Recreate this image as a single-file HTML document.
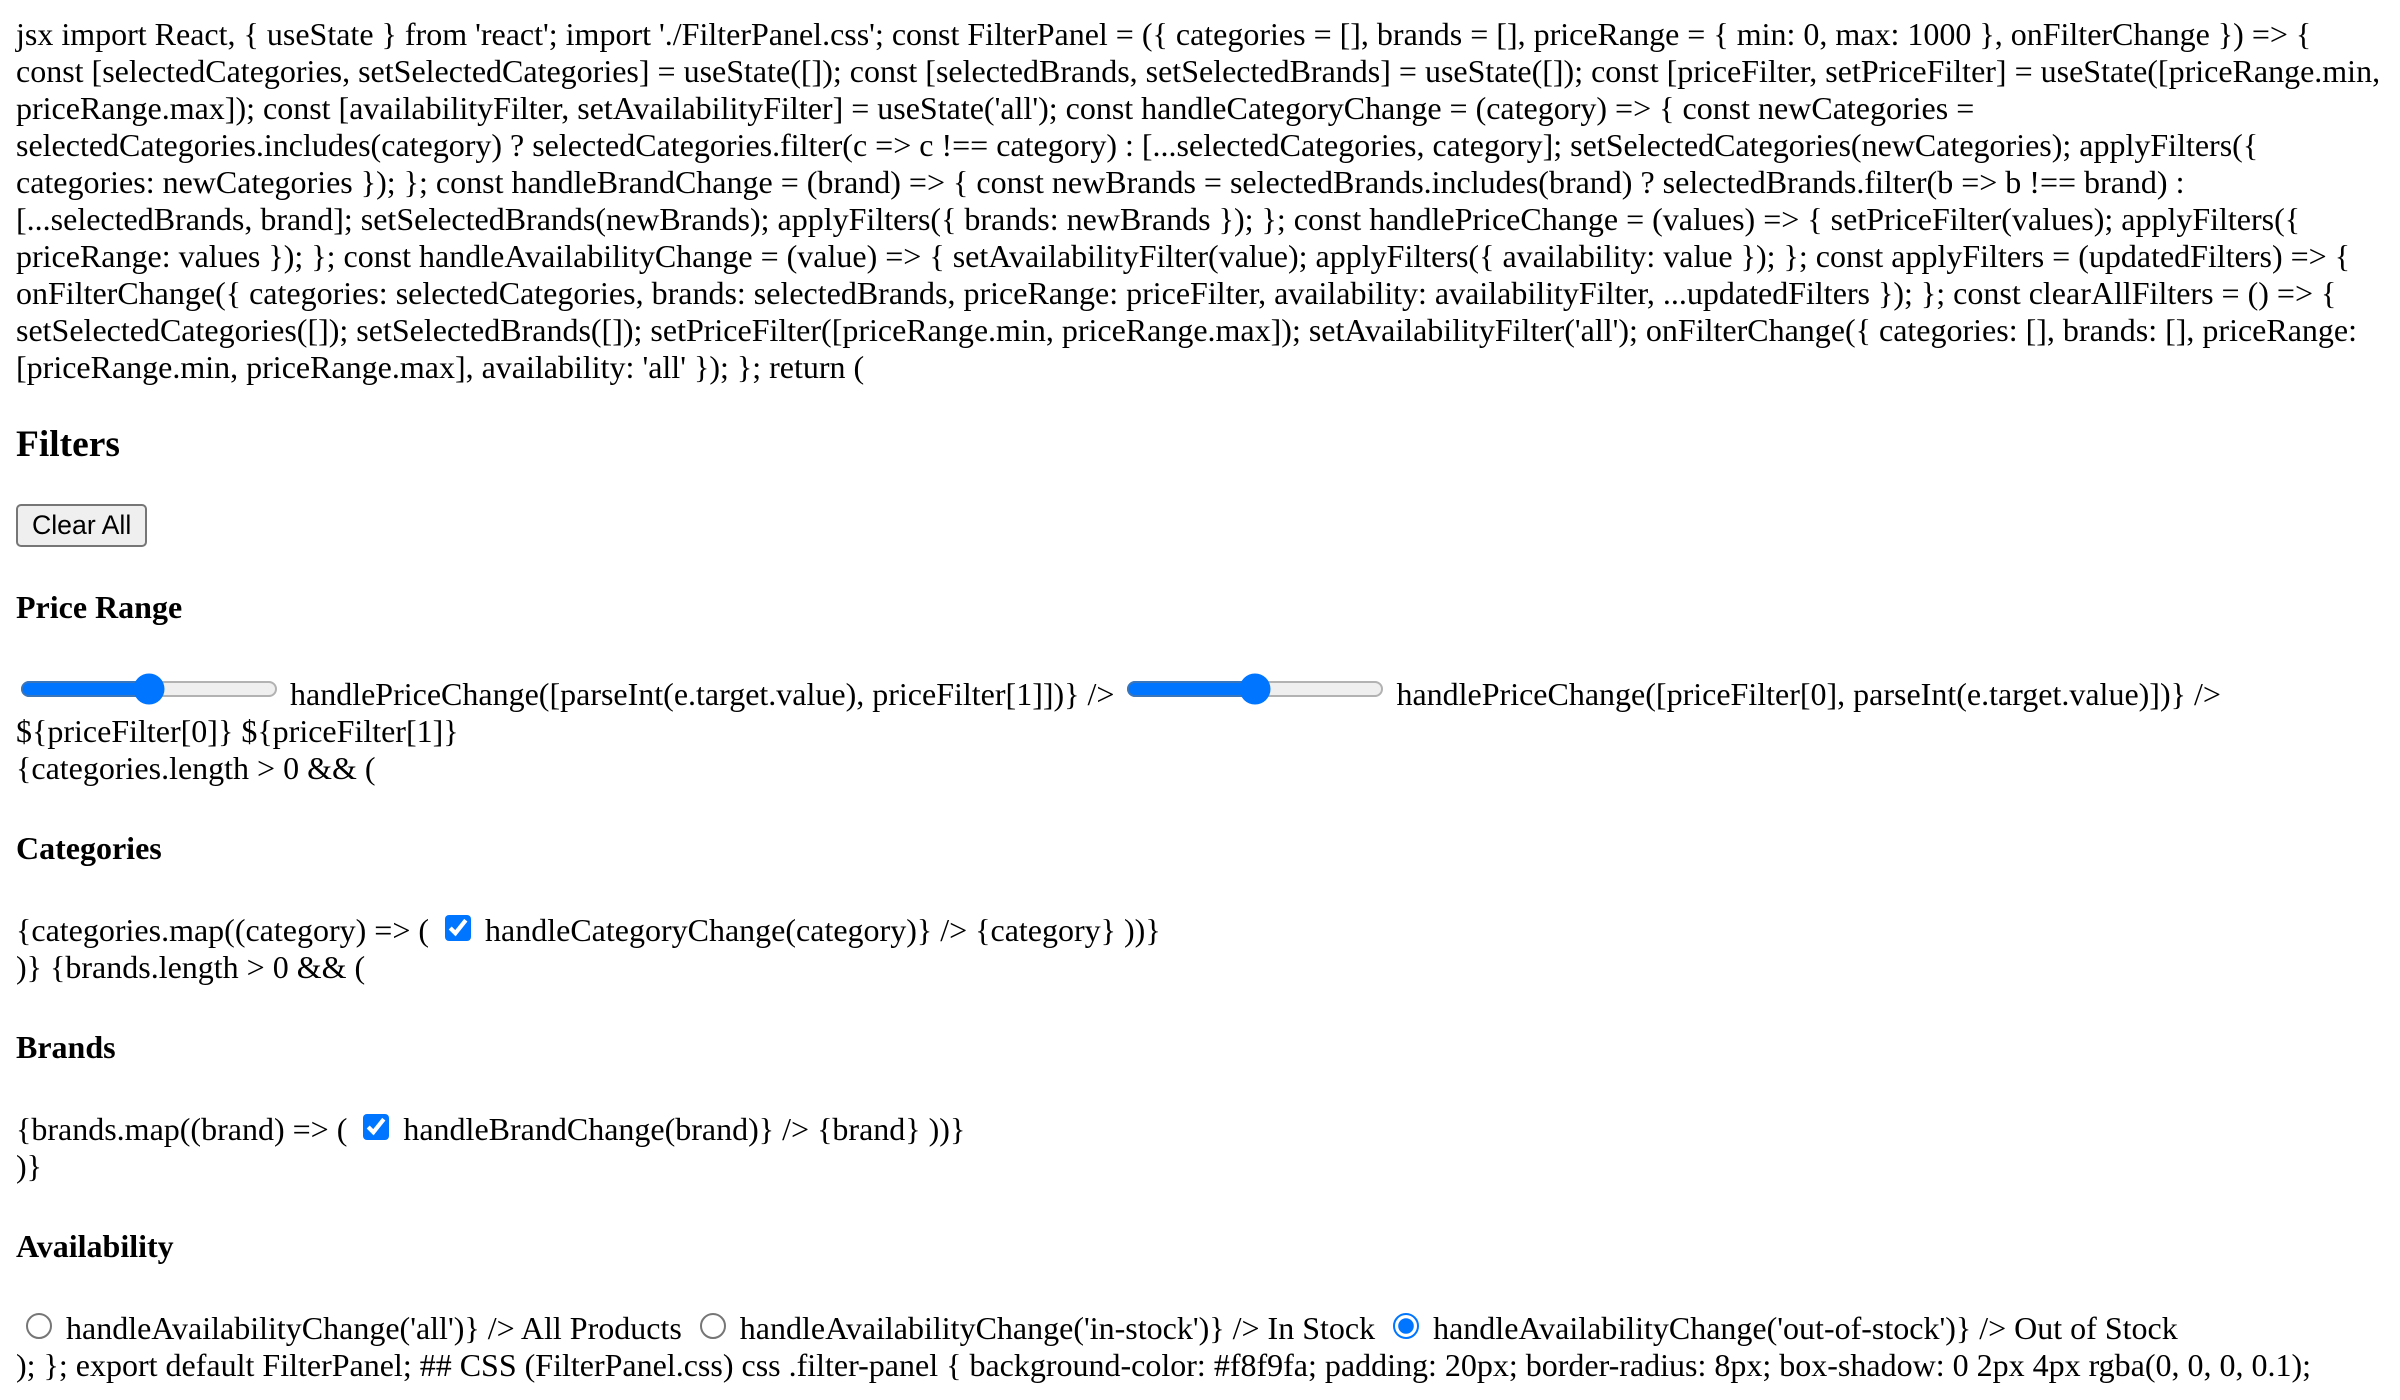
<!DOCTYPE html>
<html><head><meta charset="utf-8"><style>
html{zoom:2;}
body{margin:8px;font-family:"Liberation Serif",serif;font-size:16px;color:#000;background:#fff;}
.l{white-space:nowrap;}
h3{font-size:18.72px;margin:18.72px 0;}
h4{font-size:16px;margin:21.28px 0;}
button{font-family:"Liberation Sans",sans-serif;font-size:13.33px;padding:1px 6px;}
input[type=range]{margin:2px;}
input[type=checkbox]{margin:3px 3px 3px 4px;}
input[type=radio]{margin:3px 3px 0 5px;}
</style></head><body>
<div class="l">jsx import React, { useState } from 'react'; import './FilterPanel.css'; const FilterPanel = ({ categories = [], brands = [], priceRange = { min: 0, max: 1000 }, onFilterChange }) =&gt; {<br>
const [selectedCategories, setSelectedCategories] = useState([]); const [selectedBrands, setSelectedBrands] = useState([]); const [priceFilter, setPriceFilter] = useState([priceRange.min,<br>
priceRange.max]); const [availabilityFilter, setAvailabilityFilter] = useState('all'); const handleCategoryChange = (category) =&gt; { const newCategories =<br>
selectedCategories.includes(category) ? selectedCategories.filter(c =&gt; c !== category) : [...selectedCategories, category]; setSelectedCategories(newCategories); applyFilters({<br>
categories: newCategories }); }; const handleBrandChange = (brand) =&gt; { const newBrands = selectedBrands.includes(brand) ? selectedBrands.filter(b =&gt; b !== brand) :<br>
[...selectedBrands, brand]; setSelectedBrands(newBrands); applyFilters({ brands: newBrands }); }; const handlePriceChange = (values) =&gt; { setPriceFilter(values); applyFilters({<br>
priceRange: values }); }; const handleAvailabilityChange = (value) =&gt; { setAvailabilityFilter(value); applyFilters({ availability: value }); }; const applyFilters = (updatedFilters) =&gt; {<br>
onFilterChange({ categories: selectedCategories, brands: selectedBrands, priceRange: priceFilter, availability: availabilityFilter, ...updatedFilters }); }; const clearAllFilters = () =&gt; {<br>
setSelectedCategories([]); setSelectedBrands([]); setPriceFilter([priceRange.min, priceRange.max]); setAvailabilityFilter('all'); onFilterChange({ categories: [], brands: [], priceRange:<br>
[priceRange.min, priceRange.max], availability: 'all' }); }; return (</div>
<div>
<h3>Filters</h3>
<button>Clear All</button>
<h4>Price Range</h4>
<div class="l"><input type="range" min="0" max="1000" value="500"> handlePriceChange([parseInt(e.target.value), priceFilter[1]])} /&gt; <input type="range" min="0" max="1000" value="500"> handlePriceChange([priceFilter[0], parseInt(e.target.value)])} /&gt;<br>${priceFilter[0]} ${priceFilter[1]}</div>
<div>{categories.length &gt; 0 &amp;&amp; (</div>
<h4>Categories</h4>
<div class="l">{categories.map((category) =&gt; ( <input type="checkbox" checked> handleCategoryChange(category)} /&gt; {category} ))}</div>
<div>)} {brands.length &gt; 0 &amp;&amp; (</div>
<h4>Brands</h4>
<div class="l">{brands.map((brand) =&gt; ( <input type="checkbox" checked> handleBrandChange(brand)} /&gt; {brand} ))}</div>
<div>)}</div>
<h4>Availability</h4>
<div class="l"><input type="radio" name="a"> handleAvailabilityChange('all')} /&gt; All Products <input type="radio" name="a"> handleAvailabilityChange('in-stock')} /&gt; In Stock <input type="radio" name="a" checked> handleAvailabilityChange('out-of-stock')} /&gt; Out of Stock</div>
<div class="l">); }; export default FilterPanel; ## CSS (FilterPanel.css) css .filter-panel { background-color: #f8f9fa; padding: 20px; border-radius: 8px; box-shadow: 0 2px 4px rgba(0, 0, 0, 0.1);</div>
</div>
</body></html>
